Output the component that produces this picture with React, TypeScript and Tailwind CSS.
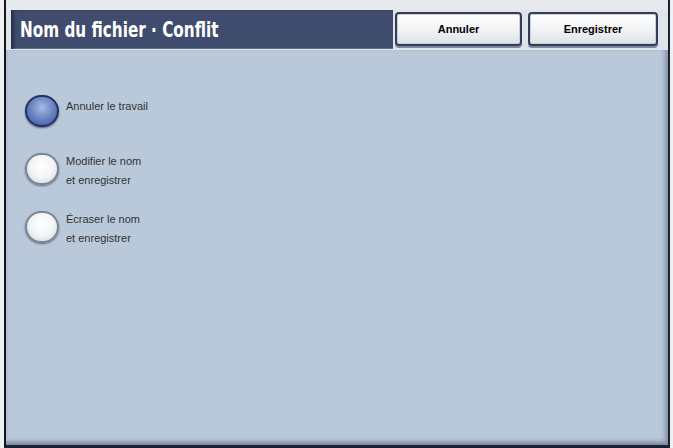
import type { ReactNode } from 'react'

const options = [
  { id: 'cancel', label: ['Annuler le travail'], selected: true },
  { id: 'rename', label: ['Modifier le nom', 'et enregistrer'], selected: false },
  { id: 'overwrite', label: ['Écraser le nom', 'et enregistrer'], selected: false },
]

function HeaderButton({ children, className }: { children: ReactNode; className: string }) {
  return (
    <button
      className={`${className} mt-[2px] h-[34px] rounded-[4px] border-2 border-[#323d58] bg-[linear-gradient(#ffffff,#eef0f3_60%,#dde1e7)] text-[11px] font-bold text-black shadow-[0_2px_0_#7e889c,inset_0_0_0_1px_#c9ced8]`}
    >
      {children}
    </button>
  )
}

function Radio({ selected }: { selected: boolean }) {
  return selected ? (
    <span className="block h-[32px] w-[34px] shrink-0 rounded-full border-2 border-[#22325f] bg-[radial-gradient(circle_at_50%_38%,#a8bbe4,#6a84c2_50%,#3b5394)] shadow-[0_1px_2px_#4f5f82]" />
  ) : (
    <span className="block h-[32px] w-[34px] shrink-0 rounded-full border-2 border-[#7b8494] bg-[radial-gradient(circle_at_50%_40%,#ffffff,#f2f4f6_50%,#cfd4db)] shadow-[0_1px_2px_#636c7e]" />
  )
}

export default function App() {
  return (
    <div className="h-[448px] w-[673px] overflow-hidden bg-[#eef1f4] font-['Liberation_Sans',Arial,sans-serif]">
      <div className="ml-[4px] flex h-[448px] w-[666px] flex-col border-r-2 border-b-[3px] border-l-2 border-r-[#1b2131] border-b-[#1b2131] border-l-[#161616]">
        {/* Top strip + header */}
        <div className="h-[10px] bg-[#e6eaee]" />
        <div className="flex h-[40px] items-start bg-[#dfe4ea] pl-[5px]">
          <div className="flex h-[39px] w-[382px] items-center overflow-hidden bg-[#3f4c6d] pl-[9px] shadow-[inset_4px_0_4px_-2px_#1f283d,inset_0_-1px_0_#6b7795]">
            <h1 className="origin-left scale-x-[0.77] font-['DejaVu_Sans_Condensed','DejaVu_Sans',sans-serif] text-[22px] font-bold whitespace-nowrap text-white">
              Nom du fichier · Conflit
            </h1>
          </div>
          <HeaderButton className="ml-[2px] w-[127px]">Annuler</HeaderButton>
          <HeaderButton className="ml-[6px] w-[130px]">Enregistrer</HeaderButton>
        </div>

        {/* Options panel */}
        <div className="flex flex-1 flex-col bg-[#b9c9da] pt-[32px] pl-[19px] shadow-[inset_-6px_0_5px_-3px_#8592a6,inset_0_-5px_4px_-2px_#76839a]">
          {options.map((opt) => (
            <div key={opt.id} className="flex h-[58px] items-center gap-[7px]">
              <Radio selected={opt.selected} />
              <div
                className={`${opt.label.length === 1 ? 'mb-[10px]' : 'mt-[3px]'} text-[11px] leading-[19px] text-[#333333]`}
              >
                {opt.label.map((line) => (
                  <div key={line}>{line}</div>
                ))}
              </div>
            </div>
          ))}
        </div>
      </div>
    </div>
  )
}
